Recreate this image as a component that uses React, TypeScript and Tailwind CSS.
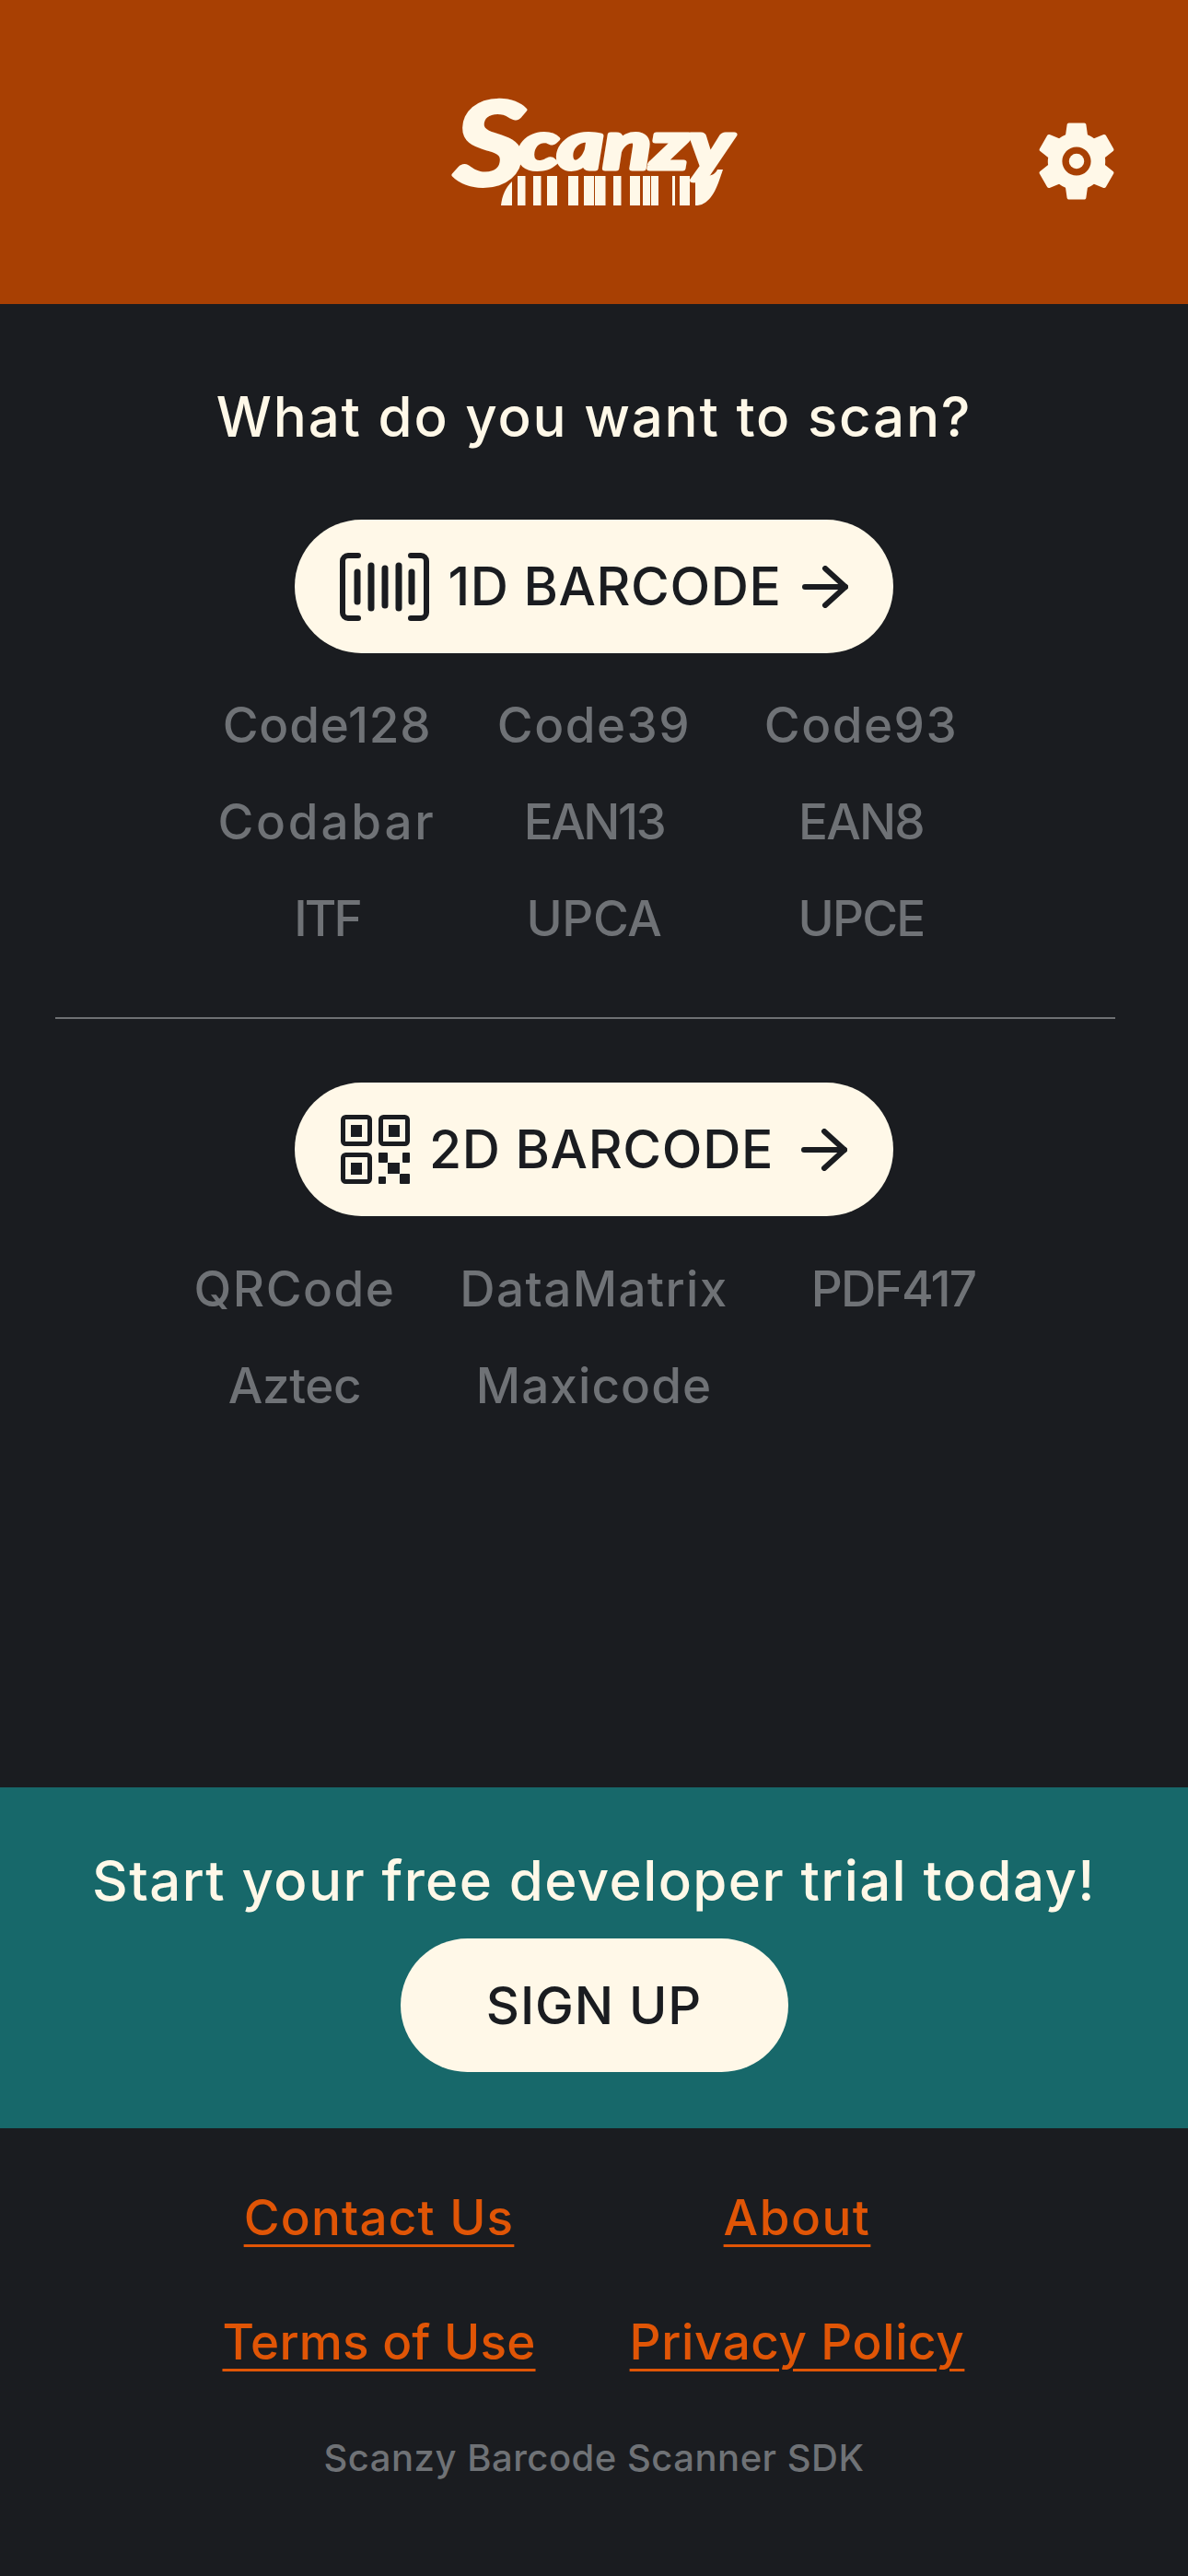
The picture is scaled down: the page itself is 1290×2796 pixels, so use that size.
import React from "react";

const gear = "M19.14 12.94c.04-.3.06-.61.06-.94 0-.32-.02-.64-.07-.94l2.03-1.58c.18-.14.23-.41.12-.61l-1.92-3.32c-.12-.22-.37-.29-.59-.22l-2.39.96c-.5-.38-1.03-.7-1.62-.94l-.36-2.54c-.04-.24-.24-.41-.48-.41h-3.84c-.24 0-.43.17-.47.41l-.36 2.54c-.59.24-1.13.57-1.62.94l-2.39-.96c-.22-.08-.47 0-.59.22L2.74 8.87c-.12.21-.08.47.12.61l2.03 1.58c-.05.3-.09.63-.09.94s.02.64.07.94l-2.03 1.58c-.18.14-.23.41-.12.61l1.92 3.32c.12.22.37.29.59.22l2.39-.96c.5.38 1.03.7 1.62.94l.36 2.54c.05.24.24.41.48.41h3.84c.24 0 .44-.17.47-.41l.36-2.54c.59-.24 1.13-.56 1.62-.94l2.39.96c.22.08.47 0 .59-.22l1.92-3.32c.12-.22.07-.47-.12-.61l-2.01-1.58zM12 15.6c-1.98 0-3.6-1.62-3.6-3.6s1.62-3.6 3.6-3.6 3.6 1.62 3.6 3.6-1.62 3.6-3.6 3.6z";

function Logo() {
  const bars: [number, number][] = [[121, 8.5], [138, 8.5], [153, 11], [176, 11], [193, 11], [205, 11.5], [225, 8.5], [243, 11], [257, 8], [266, 8], [289, 3], [297, 11], [314, 3]];
  return (
    <svg width="320" height="210" viewBox="44 -20 320 210" className="block">
      <text x="52" y="121" fill="#fff8e8" stroke="#fff8e8" strokeWidth="4" strokeLinejoin="round" fontFamily="'Lato', sans-serif" fontStyle="italic" fontWeight="700" fontSize="126" textLength="78" lengthAdjust="spacingAndGlyphs">S</text>
      <text x="122" y="103" fill="#fff8e8" stroke="#fff8e8" strokeWidth="5" strokeLinejoin="round" fontFamily="'Lato', sans-serif" fontStyle="italic" fontWeight="700" fontSize="72" textLength="232" lengthAdjust="spacingAndGlyphs">canzy</text>
      <g fill="#fff8e8">
        <path d="M103 143c1-10 5-20 12-26v26z" />
        {bars.map(([x, w]) => (
          <rect key={x} x={x} y="111" width={w} height="32" />
        ))}
        <path d="M314 143v-32h14c5-1 8-3 10-7l6 0c-6 18-12 39-30 39z" />
      </g>
    </svg>
  );
}

function BarcodeIcon() {
  return (
    <svg width="98" height="74" viewBox="0 0 98 74" fill="none" stroke="#1a1c20" strokeLinecap="round" strokeLinejoin="round" className="shrink-0">
      <path d="M20 3H9a6 6 0 0 0-6 6v56a6 6 0 0 0 6 6h11" strokeWidth="6" />
      <path d="M77 3h11a6 6 0 0 1 6 6v56a6 6 0 0 1-6 6H77" strokeWidth="6" />
      <g strokeWidth="7">
        <path d="M19 21v32" />
        <path d="M34 14v46" />
        <path d="M49 17v40" />
        <path d="M64 14v46" />
        <path d="M78 21v32" />
      </g>
    </svg>
  );
}

function QrIcon() {
  return (
    <svg width="75" height="75" viewBox="0 0 75 75" className="shrink-0" fill="#1a1c20">
      <g fill="none" stroke="#1a1c20" strokeWidth="5">
        <rect x="2.5" y="2.5" width="29" height="29" rx="3" />
        <rect x="43.5" y="2.5" width="29" height="29" rx="3" />
        <rect x="2.5" y="43.5" width="29" height="29" rx="3" />
      </g>
      <rect x="11" y="11" width="12" height="13" />
      <rect x="52" y="11" width="12" height="13" />
      <rect x="11" y="52" width="12" height="13" />
      <rect x="41" y="41" width="10" height="11" rx="1" />
      <rect x="67" y="41" width="8" height="11" rx="1" />
      <rect x="51" y="52" width="13" height="12" />
      <rect x="41" y="67" width="8" height="8" rx="1" />
      <rect x="64" y="64" width="11" height="11" rx="1" />
    </svg>
  );
}

function Arrow() {
  return (
    <svg width="50" height="46" viewBox="0 0 50 46" fill="none" stroke="#1a1c20" strokeWidth="6" strokeLinecap="round" strokeLinejoin="round" className="shrink-0">
      <path d="M3 23h44" />
      <path d="M25 3l22 20-22 20" />
    </svg>
  );
}

function Cell({ children, className }: { children: React.ReactNode; className: string }) {
  return <div className={`flex h-[105px] items-center justify-center whitespace-nowrap text-[53px] font-medium text-[#6f7276] ${className}`}>{children}</div>;
}

const oneD: [string, string][] = [
  ["Code128", "tracking-[0.8px]"],
  ["Code39", "tracking-[1.5px]"],
  ["Code93", "tracking-[1.5px]"],
  ["Codabar", "tracking-[2.8px]"],
  ["EAN13", "tracking-[-2.5px]"],
  ["EAN8", "tracking-[-1.8px]"],
  ["ITF", "tracking-[-3px]"],
  ["UPCA", "tracking-[-0.4px]"],
  ["UPCE", "tracking-[-1.8px]"],
];

const twoD: [string, string][] = [
  ["QRCode", "tracking-[1.5px]"],
  ["DataMatrix", "tracking-[1.4px]"],
  ["PDF417", "tracking-[-1.8px]"],
  ["Aztec", "tracking-[-0.4px]"],
  ["Maxicode", "tracking-[1.1px]"],
];

export default function App() {
  return (
    <div className="flex h-[2796px] w-[1290px] flex-col overflow-hidden bg-[#1a1c20] font-['Inter','Noto_Sans',sans-serif]">
      <header className="grid h-[330px] shrink-0 grid-cols-[1fr_320px_1fr] items-center bg-[#a84003]">
        <div />
        <Logo />
        <div className="mt-[20px] mr-[69px] flex justify-end">
          <svg width="104" height="104" viewBox="0 0 24 24" fill="#fff8e8" fillRule="evenodd">
            <path d={gear} />
            <circle cx="12" cy="12" r="1.9" />
          </svg>
        </div>
      </header>

      <main className="flex flex-1 flex-col items-center">
        <h1 className="mt-[84px] text-[60px] leading-[76px] font-medium tracking-[1.8px] text-[#fff8e8]">What do you want to scan?</h1>

        <button className="mt-[74px] flex h-[145px] w-[650px] items-center justify-center rounded-full bg-[#fff8e8] text-[57px] font-medium tracking-[0.6px] text-[#1a1c20]">
          <BarcodeIcon />
          <span className="mr-[23px] ml-[20px]">1D BARCODE</span>
          <Arrow />
        </button>

        <div className="mt-[26px] grid w-[870px] grid-cols-3 text-center">
          {oneD.map(([t, c]) => (
            <Cell key={t} className={c}>{t}</Cell>
          ))}
        </div>

        <div className="mt-[54px] ml-[60px] h-[2px] w-[1151px] self-start bg-[#6e7073]" />

        <button className="mt-[69px] flex h-[145px] w-[650px] items-center justify-center rounded-full bg-[#fff8e8] text-[57px] font-medium tracking-[0.7px] text-[#1a1c20]">
          <QrIcon />
          <span className="mr-[30px] ml-[21px]">2D BARCODE</span>
          <Arrow />
        </button>

        <div className="mt-[27px] grid w-[975px] grid-cols-3 text-center">
          {twoD.map(([t, c]) => (
            <Cell key={t} className={c}>{t}</Cell>
          ))}
        </div>
      </main>

      <section className="flex h-[370px] shrink-0 flex-col items-center bg-[#17686a] pt-[63px]">
        <p className="text-[60px] leading-[76px] font-medium tracking-[1.4px] text-[#fff8e8]">Start your free developer trial today!</p>
        <button className="mt-[25px] h-[145px] w-[421px] rounded-full bg-[#fff8e8] text-[56px] font-medium tracking-[0.9px] text-[#1a1c20]">SIGN UP</button>
      </section>

      <footer className="flex h-[486px] shrink-0 flex-col items-center">
        <div className="mt-[60px] mr-[13px] grid w-[908px] grid-cols-2 gap-y-[61px] text-center text-[53px] leading-[74px] font-medium text-[#e05506]">
          <a className="tracking-[1.2px] underline decoration-[3px] underline-offset-[10px]">Contact Us</a>
          <a className="tracking-[1.5px] underline decoration-[3px] underline-offset-[10px]">About</a>
          <a className="tracking-[0.2px] underline decoration-[3px] underline-offset-[10px]">Terms of Use</a>
          <a className="tracking-[0.6px] underline decoration-[3px] underline-offset-[10px]">Privacy Policy</a>
        </div>
        <p className="mt-[62px] text-[40px] leading-[54px] font-medium tracking-[0.5px] text-[#6f7276]">Scanzy Barcode Scanner SDK</p>
      </footer>
    </div>
  );
}
